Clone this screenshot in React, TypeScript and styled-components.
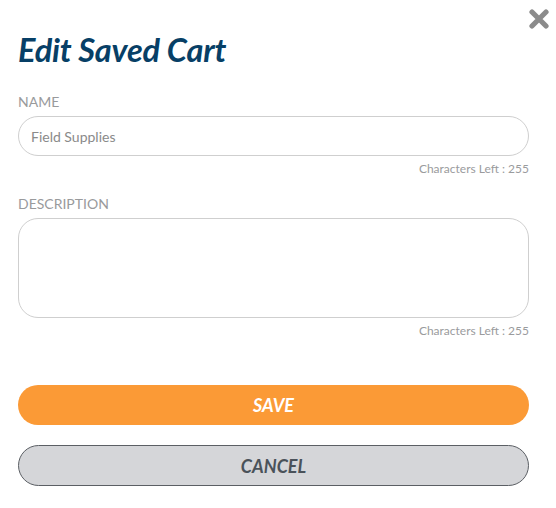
import React from "react";
import styled, { createGlobalStyle } from "styled-components";

const Global = createGlobalStyle`
  html, body { margin: 0; padding: 0; background: #fff; }
  body { font-family: Lato, "Open Sans", sans-serif; }
  * { box-sizing: border-box; }
`;

const Modal = styled.div`
  position: relative;
  width: 556px;
  height: 508px;
  padding: 31px 27px 0 18px;
  display: flex;
  flex-direction: column;
`;

const Close = styled.button`
  position: absolute;
  top: 9px;
  right: 7px;
  width: 20px;
  height: 20px;
  padding: 0;
  border: 0;
  background: transparent;
  cursor: pointer;
  display: flex;
`;

const Title = styled.h1`
  margin: 0;
  font-family: Lato, sans-serif;
  font-size: 32.5px;
  line-height: 38px;
  font-weight: 700;
  font-style: italic;
  color: #073f66;
  letter-spacing: -0.2px;
`;

const Field = styled.div<{ $top: number }>`
  display: flex;
  flex-direction: column;
  margin-top: ${(p) => p.$top}px;
`;

const Label = styled.label`
  font-size: 14px;
  line-height: 17px;
  color: #999a9c;
  text-transform: uppercase;
  margin-bottom: 6px;
`;

const Input = styled.input`
  height: 40px;
  width: 100%;
  border: 1px solid #cfcfcf;
  border-radius: 20px;
  padding: 0 12px;
  font-family: Lato, sans-serif;
  font-size: 14px;
  color: #8a8a8a;
  outline: none;
  background: #fff;
`;

const TextArea = styled.textarea`
  height: 100px;
  width: 100%;
  border: 1px solid #cfcfcf;
  border-radius: 20px;
  padding: 10px 12px;
  font-family: Lato, sans-serif;
  font-size: 14px;
  color: #8a8a8a;
  outline: none;
  resize: none;
  background: #fff;
`;

const Counter = styled.div`
  margin-top: 6px;
  text-align: right;
  font-size: 12px;
  line-height: 14px;
  color: #9a9b9d;
`;

const Button = styled.button<{ $variant: "primary" | "secondary" }>`
  width: 100%;
  height: ${(p) => (p.$variant === "primary" ? 40 : 41)}px;
  border-radius: 21px;
  font-family: Lato, sans-serif;
  font-size: 18px;
  font-weight: 700;
  font-style: italic;
  text-transform: uppercase;
  cursor: pointer;
  border: ${(p) => (p.$variant === "primary" ? "0" : "1px solid #5b5f64")};
  background: ${(p) => (p.$variant === "primary" ? "#fb9a36" : "#d5d6d9")};
  color: ${(p) => (p.$variant === "primary" ? "#ffffff" : "#4a525a")};
`;

const Actions = styled.div`
  display: flex;
  flex-direction: column;
  gap: 20px;
  margin-top: 47px;
`;

export default function App() {
  return (
    <>
      <Global />
      <Modal>
        <Close aria-label="Close">
          <svg width="20" height="20" viewBox="0 0 20 20">
            <path
              d="M3 3 L17 17 M17 3 L3 17"
              stroke="#8b8b8b"
              strokeWidth="5.2"
              strokeLinecap="round"
            />
          </svg>
        </Close>
        <Title>Edit Saved Cart</Title>
        <Field $top={24}>
          <Label>Name</Label>
          <Input defaultValue="Field Supplies" />
          <Counter>Characters Left : 255</Counter>
        </Field>
        <Field $top={19}>
          <Label>Description</Label>
          <TextArea />
          <Counter>Characters Left : 255</Counter>
        </Field>
        <Actions>
          <Button $variant="primary">Save</Button>
          <Button $variant="secondary">Cancel</Button>
        </Actions>
      </Modal>
    </>
  );
}
